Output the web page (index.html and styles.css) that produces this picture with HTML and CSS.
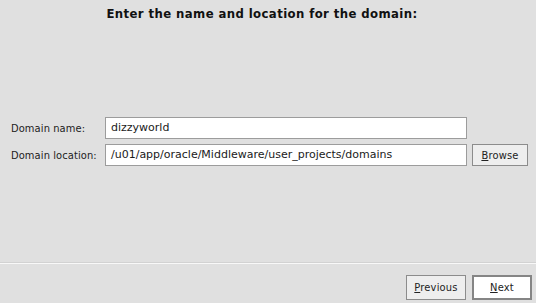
FILE: index.html
```html
<!DOCTYPE html>
<html>
<head>
<meta charset="utf-8">
<link rel="stylesheet" href="styles.css">
</head>
<body>
<div class="wizard">
  <div class="title">Enter the name and location for the domain:</div>
  <div class="content">
    <div class="form">
      <label class="label" for="dn">Domain name:</label>
      <div class="field" id="dn">dizzyworld</div>
      <div></div>
      <label class="label" for="dl">Domain location:</label>
      <div class="field" id="dl">/u01/app/oracle/Middleware/user_projects/domains</div>
      <button class="btn browse"><u>B</u>rowse</button>
    </div>
  </div>
  <div class="footer">
    <button class="btn nav"><u>P</u>revious</button>
    <button class="btn nav default"><u>N</u>ext</button>
  </div>
</div>
</body>
</html>
```
FILE: styles.css
```css
html, body {
  margin: 0;
  padding: 0;
  background: #e0e0e0;
}
.wizard {
  width: 536px;
  height: 303px;
  display: flex;
  flex-direction: column;
  font-family: "DejaVu Sans Condensed", "DejaVu Sans", sans-serif;
  font-size: 11px;
  color: #222;
}
.title {
  height: 28px;
  padding-top: 6px;
  padding-right: 12px;
  box-sizing: border-box;
  text-align: center;
  font-weight: bold;
  font-size: 13px;
  letter-spacing: 0.4px;
  color: #111;
}
.content {
  flex: 1;
  padding-top: 89px;
  box-sizing: border-box;
}
.form {
  display: grid;
  grid-template-columns: 89px 362px 56px;
  column-gap: 5px;
  row-gap: 5px;
  padding-left: 11px;
  align-items: center;
}
.label {
  white-space: nowrap;
  letter-spacing: 0.1px;
}
.field {
  height: 22px;
  box-sizing: border-box;
  border: 1px solid #9c9c9c;
  background: #fff;
  padding: 0 5px;
  line-height: 20px;
  white-space: nowrap;
  overflow: hidden;
  font-family: "DejaVu Sans", sans-serif;
  color: #1a1a1a;
}
.btn {
  font-family: inherit;
  font-size: 11px;
  letter-spacing: 0.2px;
  color: #222;
  background: #eeeeee;
  border: 1px solid #8c8c8c;
  border-radius: 0;
  padding: 0;
  margin: 0;
  height: 22px;
  box-sizing: border-box;
}
.footer {
  height: 41px;
  box-sizing: border-box;
  border-top: 1px solid #d2d2d2;
  box-shadow: inset 0 1px 0 #f8f8f8;
  display: flex;
  justify-content: flex-end;
  align-items: flex-start;
  padding-top: 12px;
  padding-right: 4px;
  column-gap: 6px;
}
.nav {
  width: 60px;
  height: 25px;
}
.default {
  background: #fff;
  border: 2px solid #858585;
}
```
